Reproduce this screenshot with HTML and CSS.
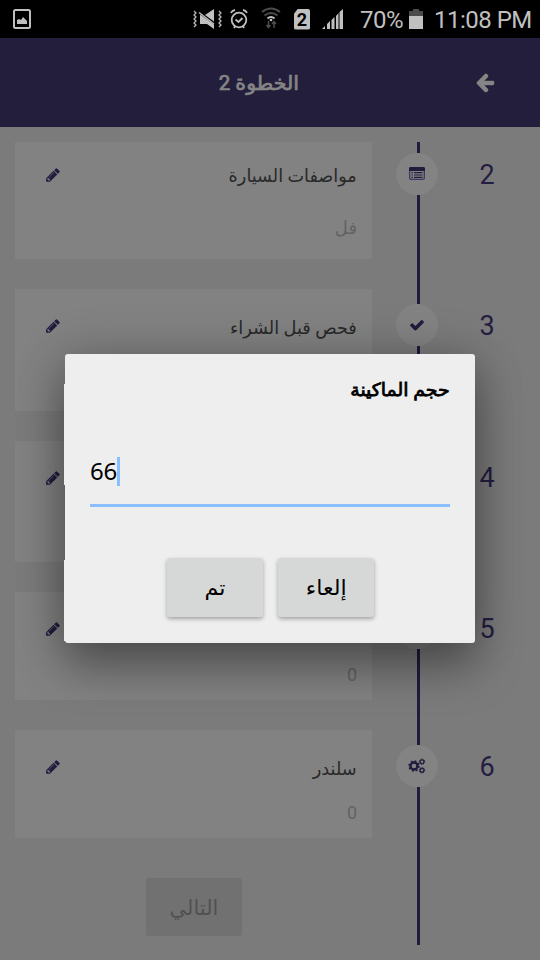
FILE: index.html
```html
<!DOCTYPE html>
<html lang="ar">
<head>
<meta charset="utf-8">
<title>الخطوة 2</title>
<link rel="stylesheet" href="styles.css">
</head>
<body>
<svg class="defs" width="0" height="0" aria-hidden="true">
  <symbol id="pencil" viewBox="0 0 1792 1792"><path d="M491 1536l91-91-235-235-91 91v107h128v128h107zm523-928q0-22-22-22-10 0-17 7l-542 542q-7 7-7 17 0 22 22 22 10 0 17-7l542-542q7-7 7-17zm-54-192l416 416-832 832h-416v-416zm683 96q0 53-37 90l-166 166-416-416 166-165q36-38 90-38 53 0 91 38l235 234q37 39 37 91z"/></symbol>
</svg>
<header class="status">
  <svg class="s-image" width="18" height="20" viewBox="0 0 18 20"><rect x="1" y="1" width="16" height="18" rx="1.5" fill="none" stroke="#c0c0c0" stroke-width="2"/><path d="M4 15v-4l2-1 2 1 2-3 2 2 2 2v3z" fill="#c0c0c0"/></svg>
  <svg class="s-mute" width="29" height="20" viewBox="0 0 29 20"><g fill="none" stroke="#b5b5b5" stroke-width="1.3"><path d="M1 2l2 2-2 2 2 2-2 2 2 2-2 2 2 2-2 2M26 2l2 2-2 2 2 2-2 2 2 2-2 2 2 2-2 2"/></g><path d="M7 5.500L21 15.500V20l-7-5H7zM12 6l9-6v12.500z" fill="#c0c0c0"/><path d="M6 3.500l15 11.500" stroke="#c0c0c0" stroke-width="1.400"/></svg>
  <svg class="s-alarm" width="18" height="20" viewBox="0 0 18 20"><g fill="none" stroke="#c0c0c0" stroke-width="1.8"><circle cx="9" cy="11" r="7.3"/><path d="M1 4q1-2.500 4-3M13 1q3 .5 4 3M5.500 10.500L8.500 13l4-4M5 17l-1 2M13 17l1 2"/></g></svg>
  <svg class="s-wifi" width="20" height="22" viewBox="0 0 20 22"><g fill="none" stroke="#4b4b4b" stroke-width="2"><path d="M1 5q9-7 18 0M3.500 8.500q6.500-5 13 0"/><path d="M7.500 14v6m-2-2l2 2.500 2-2.500M13 21v-6m-2 2l2-2.500 2 2.500" stroke-width="1.500"/><path d="M6.500 11.500q3.500-3 7 0" stroke="#c0c0c0"/></g><circle cx="10" cy="13" r="1.300" fill="#c0c0c0"/></svg>
  <span class="sim">2</span>
  <svg class="s-signal" width="21" height="20" viewBox="0 0 21 20"><path d="M0 20l3-3v3zM5 20v-5l3-3v8zM9.500 20v-9l3-3v12zM14 20V7l2.500-3v16zM17.500 20V3L21 0v20z" fill="#c0c0c0"/></svg>
  <span class="pct">70%</span>
  <svg class="s-batt" width="14" height="20" viewBox="0 0 14 20"><path d="M0 2h4V0h6v2h4v6H0z" fill="#4b4b4b"/><path d="M0 7h14v13H0z" fill="#c0c0c0"/></svg>
  <span class="clock">11:08 PM</span>
</header>
<nav class="bar">
  <h1 class="bar-title" dir="rtl"><span class="ar t-bar">الخطوة 2</span></h1>
  <svg class="back" width="20" height="20" viewBox="64 130 1664 1664"><path d="M1664 896v128q0 53-32.500 90.500t-84.500 37.500h-704l293 294q38 36 38 90t-38 90l-75 76q-37 37-90 37-52 0-91-37l-651-652q-37-37-37-90 0-52 37-91l651-650q38-38 91-38 52 0 90 38l75 74q38 38 38 91t-38 91l-293 293h704q52 0 84.500 37.500t32.500 90.500z"/></svg>
</nav>
<main class="steps">
  <section class="step step-first">
    <div class="card"><svg class="edit"><use href="#pencil"/></svg><div class="text" dir="rtl"><b class="ar t-spec">مواصفات السيارة</b><i class="ar t-full">فل</i></div></div>
    <div class="rail"><div class="dot"><svg width="16" height="14" viewBox="0 0 16 14"><rect x=".7" y=".7" width="14.600" height="11.600" rx="1.200" fill="none" stroke="#3d3762" stroke-width="1.300"/><path d="M0 1.500Q0 0 1.500 0h13Q16 0 16 1.500V4H0z" fill="#211b3d"/><path d="M2.500 5.700H4M5 5.700h8.500M2.500 8H4M5 8h8.500M2.500 10.300H4M5 10.300h8.500" stroke="#211b3d" stroke-width="1.200"/></svg></div></div>
    <div class="num">2</div>
  </section>
  <section class="step step-b">
    <div class="card"><svg class="edit"><use href="#pencil"/></svg><div class="text" dir="rtl"><b class="ar t-check">فحص قبل الشراء</b></div></div>
    <div class="rail"><div class="dot"><svg width="16" height="16" viewBox="0 0 1792 1792" fill="#211b3d"><path d="M1671 566q0 40-28 68l-724 724-136 136q-28 28-68 28t-68-28l-136-136-362-362q-28-28-28-68t28-68l136-136q28-28 68-28t68 28l294 295 656-657q28-28 68-28t68 28l136 136q28 28 28 68z"/></svg></div></div>
    <div class="num">3</div>
  </section>
  <section class="step step-c">
    <div class="card"><svg class="edit"><use href="#pencil"/></svg></div>
    <div class="rail"><div class="dot"></div></div>
    <div class="num">4</div>
  </section>
  <section class="step step-d">
    <div class="card"><svg class="edit"><use href="#pencil"/></svg><div class="text zero" dir="rtl"><i class="ar digit">0</i></div></div>
    <div class="rail"><div class="dot"></div></div>
    <div class="num">5</div>
  </section>
  <section class="step step-e">
    <div class="card"><svg class="edit"><use href="#pencil"/></svg><div class="text" dir="rtl"><b class="ar t-cyl">سلندر</b><i class="ar digit">0</i></div></div>
    <div class="rail"><div class="dot"><svg width="18" height="16" viewBox="0 0 18 16" fill="none" stroke="#211b3d"><circle cx="6" cy="8" r="3.500" stroke-width="2.400"/><circle cx="6" cy="8" r="4.900" stroke-width="1.700" stroke-dasharray="1.924 1.924"/><circle cx="14" cy="3.700" r="1.900" stroke-width="1.300"/><circle cx="14" cy="3.700" r="2.700" stroke-width="1" stroke-dasharray="1.060 1.060"/><circle cx="14" cy="12.300" r="1.900" stroke-width="1.300"/><circle cx="14" cy="12.300" r="2.700" stroke-width="1" stroke-dasharray="1.060 1.060"/></svg></div></div>
    <div class="num">6</div>
  </section>
  <div class="next"><span class="ar t-next">التالي</span></div>
</main>
<div class="dialog">
  <h2 class="dialog-title" dir="rtl"><span class="ar t-dialog">حجم الماكينة</span></h2>
  <div class="field"><span>66</span><span class="caret"></span></div>
  <div class="actions">
    <div class="btn"><span class="ar t-ok">تم</span></div>
    <div class="btn"><span class="ar t-cancel">إلعاء</span></div>
  </div>
</div>
</body>
</html>
```
FILE: styles.css
```css
* { box-sizing: border-box; }
body { margin: 0; width: 540px; height: 960px; overflow: hidden; position: relative; background: #7b7b7b; font-family: Roboto, "DejaVu Sans", sans-serif; }
.defs { position: absolute; }
.ar { display: inline-block; white-space: nowrap; font-family: Roboto, "DejaVu Sans", sans-serif; transform-origin: right center; }
.t-spec { transform: scaleX(.98); }
.t-check, .t-cyl { transform: scaleX(.985); }

.status { height: 38px; background: #000; display: flex; align-items: center; color: #c0c0c0; font-size: 24px; padding-left: 13px; }
.status svg { flex: none; }
.s-mute { margin-left: 162px; }
.s-alarm { margin-left: 8px; }
.s-wifi { margin-left: 13px; margin-top: -3px; }
.sim { width: 16px; height: 21px; margin-left: 13px; background: #c0c0c0; color: #000; border-radius: 2px; clip-path: polygon(25% 0, 100% 0, 100% 100%, 0 100%, 0 25%); font-size: 18px; line-height: 21px; font-weight: 700; text-align: center; }
.s-signal { margin-left: 12px; margin-top: -1px; }
.pct { margin-left: 17px; width: 43px; white-space: nowrap; letter-spacing: -.5px; padding-top: 2px; }
.s-batt { margin-left: 6px; }
.clock { margin-left: 11px; white-space: nowrap; letter-spacing: -.5px; padding-top: 2px; }

.bar { height: 89px; background: #231e3c; display: flex; align-items: center; padding-left: 199px; }
.bar-title { margin: 0; width: 100px; font-size: 20px; line-height: 30px; color: #858585; font-weight: 400; text-align: start; -webkit-text-stroke: .7px #858585; }
.t-bar { transform: scaleX(1.03); }
.back { margin-left: 176px; fill: #858585; }

.steps { padding-top: 15px; display: flex; flex-direction: column; }
.step { display: grid; grid-template-columns: 357px 90px 50px; padding-left: 15px; height: 138px; --lead: 15px; }
.step-first { height: 147px; --lead: 11px; }
.step-b { height: 152px; }
.step-c { height: 151px; }
.card { background: #828282; margin-bottom: 30px; padding: calc(var(--lead) + 11px) 15px 0 30px; display: flex; justify-content: space-between; align-items: flex-start; }
.edit { width: 16px; height: 16px; fill: #211b3d; margin-top: 3px; }
.text { display: flex; flex-direction: column; padding-top: 1px; }
.text b, .text i { font-weight: 400; font-style: normal; font-size: 18px; line-height: 24px; color: #292929; }
.text i { color: #626262; margin-top: 20px; }
.step-first .text { padding-top: 0; }
.step-first .edit { margin-top: 3px; }
.step-first .text i { margin-top: 28px; }
.text.zero { padding-top: 25px; }
.rail { display: flex; flex-direction: column; align-items: center; }
.rail::before, .rail::after { content: ""; width: 3px; background: #211b3d; margin-left: 3px; }
.rail::before { height: var(--lead); }
.rail::after { flex: 1; }
.dot { width: 42px; height: 42px; border-radius: 50%; background: #838383; display: grid; place-items: center; }
.num { padding-top: calc(var(--lead) + 5px); line-height: 34px; font-size: 27px; color: #241e42; text-align: center; }
.step-e { height: 215px; }
.step-e .card { margin-bottom: 107px; }
.step-d, .step-e { --lead: 15px; }
.next { width: 96px; height: 58px; margin: -67px 0 0 146px; padding-top: 2px; border-radius: 3px; background: #717171; color: #515151; font-size: 21px; display: grid; place-items: center; }

.dialog { position: absolute; left: 65px; top: 354px; width: 410px; height: 289px; padding: 20px 25px; border-radius: 3px; background: #eee; color: #000; box-shadow: 0 24px 46px rgba(0, 0, 0, .34), 0 0 50px rgba(0, 0, 0, .2); }
.dialog::before, .dialog::after { content: ""; position: absolute; left: -1px; width: 1px; background: #eee; }
.dialog::before { top: 30px; height: 101px; }
.dialog::after { top: 206px; height: 81px; }
.dialog-title { margin: 0; padding-top: 1px; font-size: 18px; line-height: 29px; font-weight: 400; -webkit-text-stroke: .8px #000; }
.t-dialog { transform: scaleX(1.05); }
.field { margin-top: 47px; height: 56px; border-bottom: 3px solid #89beff; display: flex; align-items: flex-start; font: 24px/40px "Noto Sans", sans-serif; }
.field span:first-child { width: 27px; letter-spacing: -.3px; }
.caret { width: 3px; height: 29px; margin-top: 6px; background: #89beff; }
.actions { display: flex; justify-content: center; gap: 15px; margin: 51px 0 0 1px; }
.btn { width: 96px; height: 59px; padding-top: 1px; border-radius: 3px; background: #d6d8d7; box-shadow: 0 2px 4px rgba(0, 0, 0, .32); font-size: 21px; display: grid; place-items: center; }
.t-cancel, .t-ok { transform: scaleX(1.06); transform-origin: center; }
```
